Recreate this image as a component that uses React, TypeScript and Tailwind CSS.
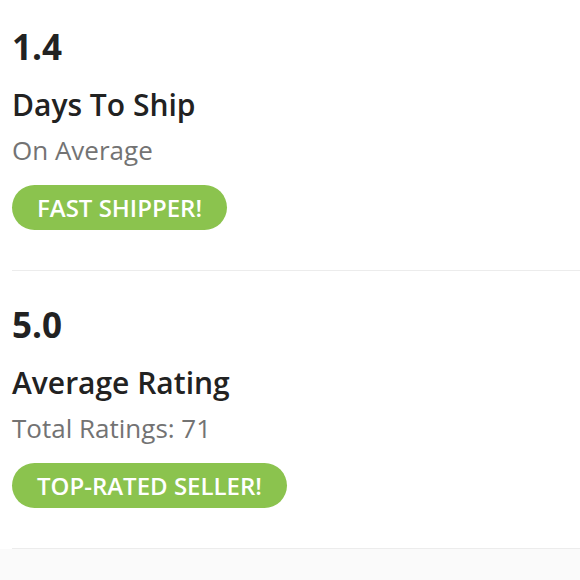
const stats = [
  { value: '1.4', title: 'Days To Ship', sub: 'On Average', badge: 'FAST SHIPPER!' },
  { value: '5.0', title: 'Average Rating', sub: 'Total Ratings: 71', badge: 'TOP-RATED SELLER!' },
]

function StatBlock({ value, title, sub, badge }: (typeof stats)[number]) {
  return (
    <section className="pl-[12px] pt-[36px] pb-[40px]">
      <div className="text-[35px] font-bold leading-[35px] text-[#222]">{value}</div>
      <h2 className="mt-[26px] text-[30px] font-semibold leading-[30px] text-[#222]">{title}</h2>
      <p className="mt-[17px] text-[26px] leading-[26px] text-[#737373]">{sub}</p>
      <div className="mt-[22px] inline-flex h-[45px] items-center rounded-full bg-[#8bc34e] px-[25px] text-[24px] font-semibold leading-none text-white">
        {badge}
      </div>
    </section>
  )
}

export default function App() {
  return (
    <div
      className="flex h-[580px] w-[580px] flex-col overflow-hidden bg-white"
      style={{ fontFamily: '"Open Sans", sans-serif' }}
    >
      <div className="-mt-[7px]">
        {stats.map((s) => (
          <div key={s.value} className="ml-[12px] border-b border-[#ececec]">
            <div className="-ml-[12px]">
              <StatBlock {...s} />
            </div>
          </div>
        ))}
      </div>
      <div className="flex-1 bg-[#fafafa]" />
    </div>
  )
}
